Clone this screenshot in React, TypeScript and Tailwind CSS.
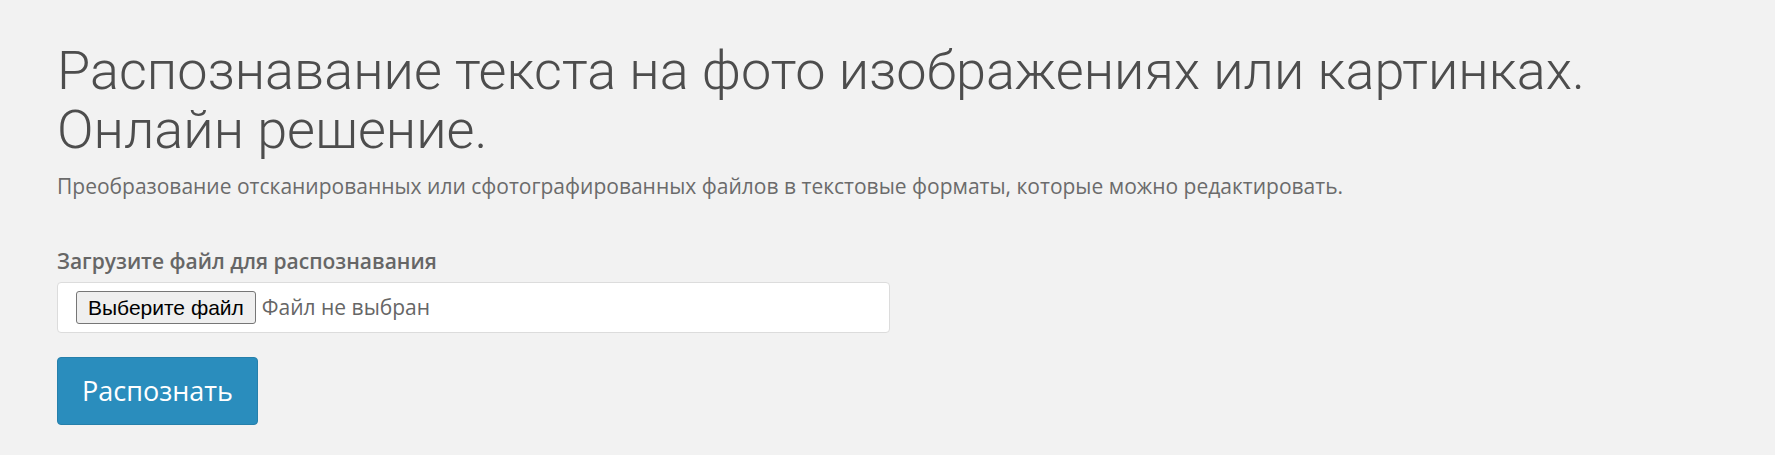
import React from "react";

export default function App() {
  return (
    <div className="min-h-[455px] w-full bg-[#f2f2f2] pl-[57px] pt-[41px]">
      <h1
        className="text-[54px] leading-[59px] font-light text-[#4d4d4d]"
        style={{ fontFamily: "Roboto, sans-serif" }}
      >
        Распознавание текста на фото изображениях или картинках.
        <br />
        Онлайн решение.
      </h1>
      <p
        className="mt-[12px] text-[21px] leading-[30px] text-[#6b6b6b]"
        style={{ fontFamily: "'Open Sans', sans-serif" }}
      >
        Преобразование отсканированных или сфотографированных файлов в текстовые форматы, которые можно редактировать.
      </p>
      <div style={{ fontFamily: "'Open Sans', sans-serif" }}>
        <div className="mt-[46px] text-[21px] leading-[28px] font-semibold text-[#666]">
          Загрузите файл для распознавания
        </div>
        <div className="mt-[7px] flex h-[51px] w-[833px] items-center rounded-[4px] border border-[#dcdcdc] bg-white pl-[18px]">
          <span
            className="flex h-[33px] items-center rounded-[3px] border border-[#767676] bg-[#efefef] px-[11px] text-[21px] text-black"
            style={{ fontFamily: "Arial, 'Liberation Sans', sans-serif" }}
          >
            Выберите файл
          </span>
          <span className="ml-[6px] text-[21px] text-[#666]">Файл не выбран</span>
        </div>
        <button className="mt-[24px] flex h-[68px] w-[201px] items-center justify-center rounded-[4px] border border-[#2680ab] bg-[#2a8dbd] text-[27px] text-white">
          Распознать
        </button>
      </div>
    </div>
  );
}
